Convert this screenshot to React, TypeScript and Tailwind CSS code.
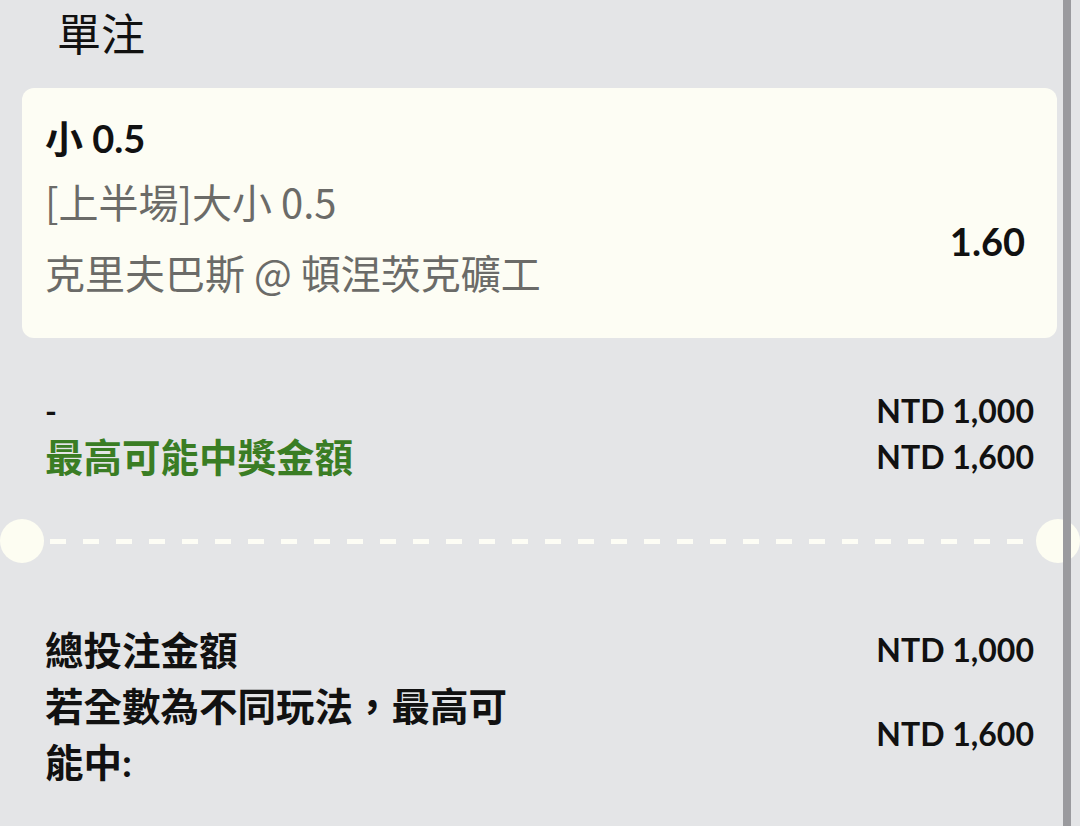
import React from 'react';

const FONT = "font-['Lato','Noto_Sans_CJK_TC',sans-serif]";

interface Row {
  label: string[];
  amount: string;
}

const totals: Row[] = [
  { label: ['總投注金額'], amount: 'NTD 1,000' },
  { label: ['若全數為不同玩法，最高可', '能中:'], amount: 'NTD 1,600' },
];

const App: React.FC = () => {
  return (
    <div className={`relative w-[1080px] h-[826px] overflow-hidden bg-[#e4e5e7] text-[#111] ${FONT}`}>
      {/* 標題 */}
      <div className="h-[68px] flex items-center pl-[57px] text-[44px] leading-none">單注</div>

      {/* 投注卡片 */}
      <div className="mt-[20px] ml-[22px] w-[1035px] h-[250px] rounded-[12px] bg-[#fdfdf4] pl-[23px] pr-[32px] pt-[16px]">
        <div className="h-[68px] flex items-center text-[38px] font-bold leading-none">小 0.5</div>
        <div className="flex">
          <div className="flex-1 text-[40px] leading-none text-[#6b6b68] font-['Noto_Sans_CJK_TC',sans-serif]">
            <div className="h-[58px] flex items-center">[上半場]大小 0.5</div>
            <div className="h-[84px] flex items-center">克里夫巴斯 @ 頓涅茨克礦工</div>
          </div>
          <div className="flex items-center pb-[4px] text-[38px] font-bold leading-none">1.60</div>
        </div>
      </div>

      {/* 金額 */}
      <div className="mt-[50px] pl-[45px] pr-[46px] font-bold leading-none">
        <div className="h-[46px] flex items-center justify-between">
          <span className="text-[32px]">-</span>
          <span className="text-[32px]">NTD 1,000</span>
        </div>
        <div className="h-[46px] flex items-center justify-between">
          <span className="text-[38.5px] text-[#3a7d24]">最高可能中獎金額</span>
          <span className="text-[32px]">NTD 1,600</span>
        </div>
      </div>

      {/* 分隔線 */}
      <div className="mt-[39px] h-[44px] flex items-center">
        <div className="w-[44px] h-[44px] rounded-full bg-[#fdfdf2] shrink-0" />
        <div className="flex-1 h-[5px] mx-[6px] bg-[repeating-linear-gradient(90deg,#fdfdf5_0px,#fdfdf5_16px,transparent_16px,transparent_33px)]" />
        <div className="w-[44px] h-[44px] rounded-full bg-[#fdfdf2] shrink-0" />
      </div>

      {/* 總計 */}
      <div className="mt-[59px] pl-[45px] pr-[46px] font-bold">
        {totals.map((row) => (
          <div key={row.amount} className="flex items-center justify-between">
            <div className="w-[480px] text-[38.5px] leading-[56px]">
              {row.label.map((l) => (
                <div key={l}>{l}</div>
              ))}
            </div>
            <span className="text-[32px] leading-none">{row.amount}</span>
          </div>
        ))}
      </div>

      {/* 捲軸 */}
      <div className="absolute top-0 bottom-0 right-[9px] w-[8px] bg-[#9a9a9e]" />
    </div>
  );
};

export default App;
